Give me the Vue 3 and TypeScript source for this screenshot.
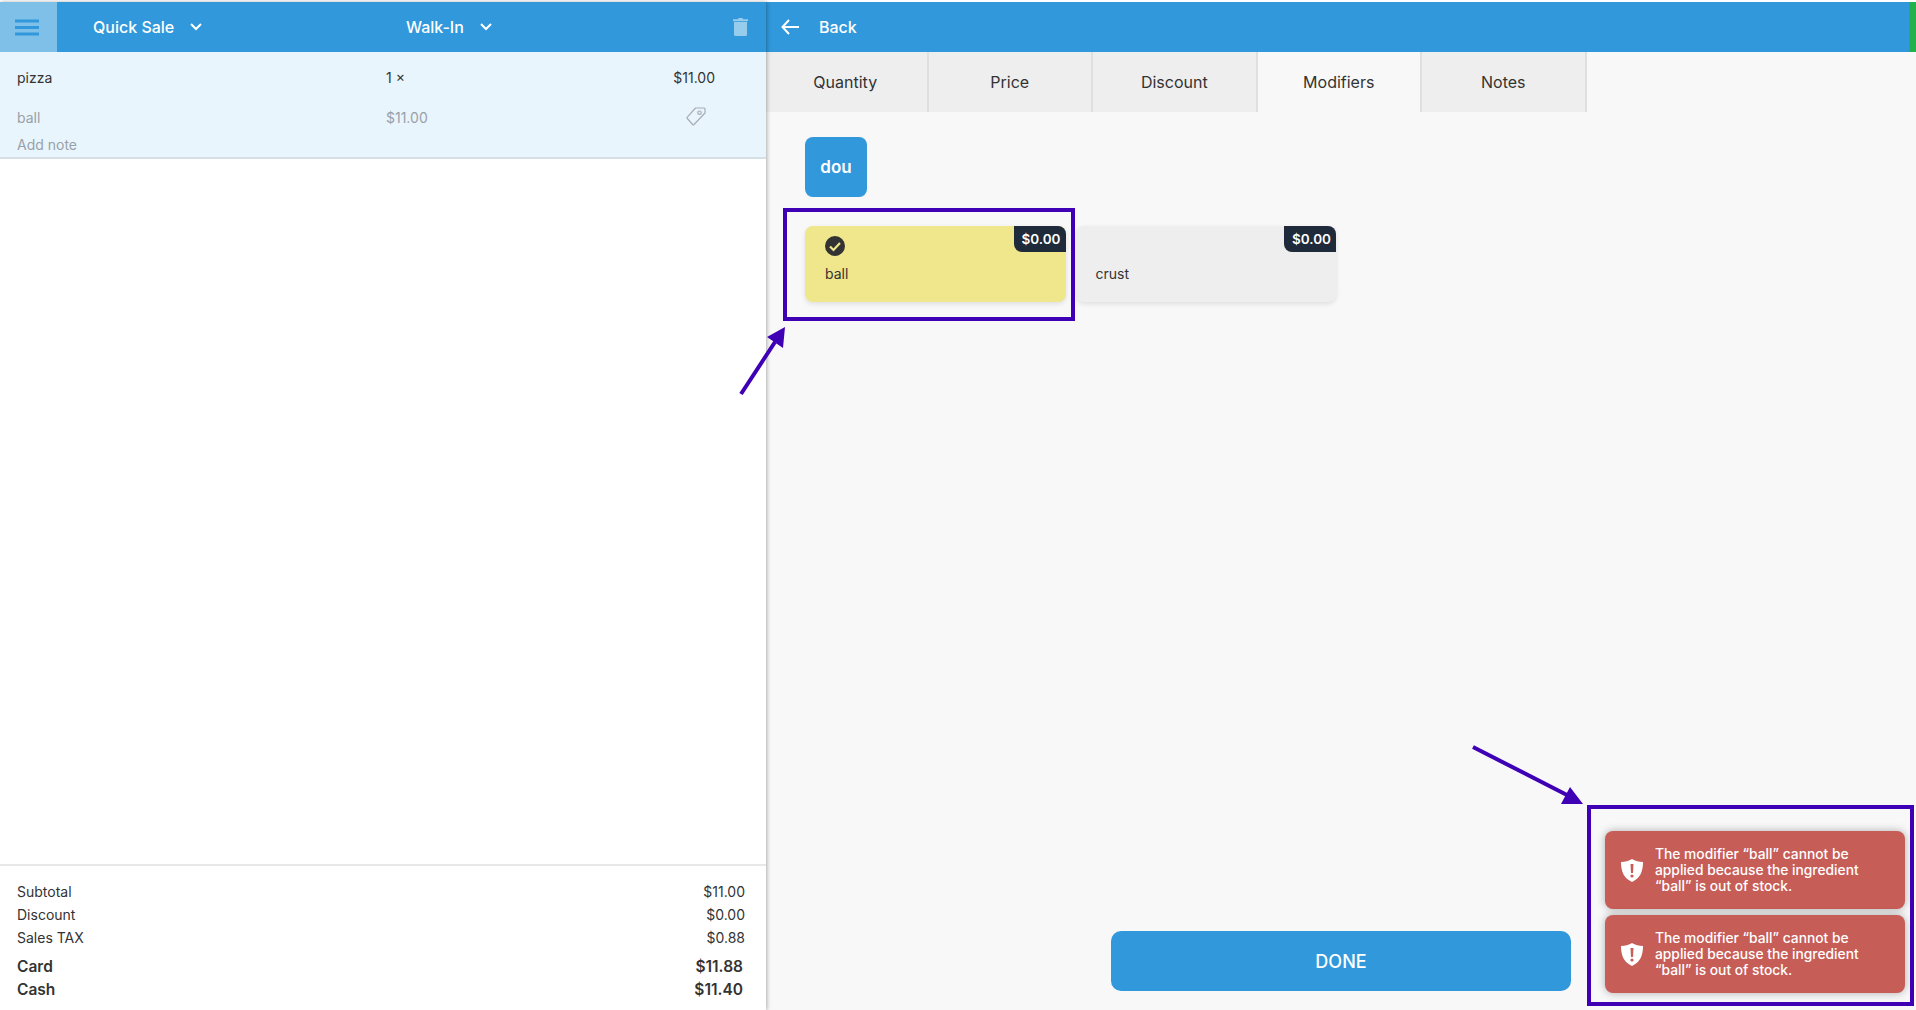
<script setup lang="ts">
const tabs = ['Quantity', 'Price', 'Discount', 'Modifiers', 'Notes']
const modifiers = [
  { name: 'ball', price: '$0.00', selected: true },
  { name: 'crust', price: '$0.00', selected: false },
]
const summary = [
  { label: 'Subtotal', value: '$11.00' },
  { label: 'Discount', value: '$0.00' },
  { label: 'Sales TAX', value: '$0.88' },
]
const totals = [
  { label: 'Card', value: '$11.88' },
  { label: 'Cash', value: '$11.40' },
]
const toasts = [
  'The modifier “ball” cannot be applied because the ingredient “ball” is out of stock.',
  'The modifier “ball” cannot be applied because the ingredient “ball” is out of stock.',
]
</script>

<template>
  <div class="app">
    <section class="left">
      <header class="left-bar">
        <div class="menu">
          <svg width="24" height="18" viewBox="0 0 24 18"><path d="M0 3h24M0 9.500h24M0 16h24" stroke="#3098db" stroke-width="3" /></svg>
        </div>
        <div class="picker first">
          Quick Sale
          <svg class="chev" width="14" height="9" viewBox="0 0 14 9"><path d="M2 2l5 5 5-5" fill="none" stroke="#fff" stroke-width="2" /></svg>
        </div>
        <div class="picker">
          Walk-In
          <svg class="chev" width="14" height="9" viewBox="0 0 14 9"><path d="M2 2l5 5 5-5" fill="none" stroke="#fff" stroke-width="2" /></svg>
        </div>
        <svg class="trash" width="15" height="18" viewBox="0 0 15 18">
          <path d="M0 1.200h5L5.500 0h4l.5 1.200h5V3.200H0zM1 4h13v12.500a1.500 1.500 0 0 1-1.500 1.500h-10A1.500 1.500 0 0 1 1 16.500z" fill="#fff" fill-opacity=".5" />
        </svg>
      </header>

      <div class="item">
        <div class="item-row main">
          <span>pizza</span>
          <span>1 ×</span>
          <span class="end">$11.00</span>
        </div>
        <div class="item-row sub">
          <span>ball</span>
          <span>$11.00</span>
          <span class="end">
            <svg class="tag" width="20" height="19" viewBox="0 0 20 19">
              <path d="M9.500 1H18a1 1 0 0 1 1 1v4L8 17.500a1 1 0 0 1-1.400 0L1.300 11.500a1 1 0 0 1 0-1.400z" fill="none" stroke="#a6adb3" stroke-width="1.200" stroke-linejoin="round" />
              <circle cx="13.500" cy="5.700" r="1.700" fill="none" stroke="#a6adb3" stroke-width="1.200" />
            </svg>
          </span>
        </div>
        <div class="note">Add note</div>
      </div>

      <div class="spacer"></div>

      <div class="summary">
        <div v-for="row in summary" :key="row.label" class="sum-row">
          <span>{{ row.label }}</span><span>{{ row.value }}</span>
        </div>
        <div class="totals">
          <div v-for="row in totals" :key="row.label" class="sum-row total">
            <span>{{ row.label }}</span><span>{{ row.value }}</span>
          </div>
        </div>
      </div>
    </section>

    <section class="right">
      <header class="right-bar">
        <svg width="18" height="16" viewBox="0 0 18 16"><path d="M8 1L1.500 8 8 15M2 8h16" fill="none" stroke="#fff" stroke-width="2" /></svg>
        <span>Back</span>
        <i class="status"></i>
      </header>

      <nav class="tabs">
        <div v-for="tab in tabs" :key="tab" :class="['tab', { active: tab === 'Modifiers' }]">{{ tab }}</div>
      </nav>

      <div class="content">
        <button class="group">dou</button>
        <div class="mods">
          <div v-for="mod in modifiers" :key="mod.name" :class="['mod', { selected: mod.selected }]">
            <span class="price">{{ mod.price }}</span>
            <div class="check-slot">
              <svg v-if="mod.selected" width="20" height="20" viewBox="0 0 20 20">
                <circle cx="10" cy="10" r="10" fill="#333" />
                <path d="M5 10.500l3.500 3.500L15 7" fill="none" stroke="#f0e68c" stroke-width="2.200" />
              </svg>
            </div>
            <div class="mod-name">{{ mod.name }}</div>
          </div>
        </div>
      </div>

      <div class="footer">
        <button class="done">DONE</button>
      </div>
    </section>

    <div class="toasts">
      <div v-for="(msg, i) in toasts" :key="i" class="toast">
        <svg width="22" height="23" viewBox="0 0 22 23">
          <path d="M11 0c3 2 7 3 11 3 0 9-2.500 16-11 20C2.500 19 0 12 0 3c4 0 8-1 11-3z" fill="#fff" />
          <path d="M9.500 5h3l-.5 9h-2z" fill="#c75d57" />
          <circle cx="11" cy="17" r="1.600" fill="#c75d57" />
        </svg>
        <p>{{ msg }}</p>
      </div>
    </div>

    <!-- annotations drawn on top of the screenshot -->
    <svg class="marks" width="1916" height="1010" viewBox="0 0 1916 1010">
      <g fill="none" stroke="#3f00b5" stroke-width="4">
        <rect x="785" y="210" width="288" height="109" />
        <rect x="1589" y="807" width="323" height="197" />
        <path d="M741 394L775 342M1473 747L1567 795" />
      </g>
      <path d="M785 327L767 337 783 348zM1583 804L1570 787 1561 804z" fill="#3f00b5" />
    </svg>
  </div>
</template>

<style>
html, body { margin: 0; background: #fff; }
</style>

<style scoped>
.app {
  position: relative;
  display: flex;
  width: 1916px;
  height: 1010px;
  padding-top: 2px;
  box-sizing: border-box;
  overflow: hidden;
  font-family: Inter, "Liberation Sans", sans-serif;
  font-size: 14px;
  color: #333;
}
.left {
  position: relative;
  z-index: 2;
  display: flex;
  flex-direction: column;
  width: 766px;
  flex-shrink: 0;
  background: #fff;
  box-shadow: 1px 0 4px rgba(0, 0, 0, .3);
}
.left-bar, .right-bar {
  display: flex;
  align-items: center;
  height: 50px;
  padding-bottom: 1px;
  box-sizing: border-box;
  background: #3098db;
  color: #fff;
  font-size: 16px;
  font-weight: 500;
  flex-shrink: 0;
}
.menu {
  display: flex;
  align-items: center;
  justify-content: center;
  width: 57px;
  height: 50px;
  margin-bottom: -1px;
  padding-right: 3px;
  box-sizing: border-box;
  background: #7fc0e8;
}
.picker {
  display: flex;
  align-items: center;
  flex: 1;
}
.picker.first {
  flex: none;
  width: 349px;
  box-sizing: border-box;
  padding-left: 36px;
}
.chev { margin-left: 15px; }
.trash { margin-right: 18px; }
.item {
  background: #e9f5fc;
  border-bottom: 2px solid #d6dfe6;
  height: 107px;
  box-sizing: border-box;
  flex-shrink: 0;
}
.item-row {
  display: grid;
  grid-template-columns: 369px 1fr auto;
  align-items: center;
  padding: 0 51px 0 17px;
}
.item-row.main { height: 50px; }
.item-row.sub { height: 30px; color: #98a1a9; }
.end { display: flex; justify-content: flex-end; }
.tag { margin-right: 9px; margin-top: -2px; }
.note { padding-left: 17px; line-height: 26px; color: #98a1a9; }
.spacer { flex: 1; }
.summary {
  border-top: 2px solid #e8e8e8;
  padding: 14px 21px 9px 17px;
}
.sum-row {
  display: flex;
  justify-content: space-between;
  line-height: 23px;
}
.totals { margin-top: 6px; }
.total { font-size: 15.500px; font-weight: 600; padding-right: 2px; }
.right {
  display: flex;
  flex-direction: column;
  flex: 1;
  min-width: 0;
  background: #f8f8f8;
}
.right-bar { padding-left: 15px; gap: 20px; }
.status {
  width: 7px;
  height: 50px;
  margin-bottom: -1px;
  margin-left: auto;
  background: #22b14c;
}
.tabs {
  display: flex;
  margin-left: -2px;
  height: 60px;
  flex-shrink: 0;
}
.tab {
  display: flex;
  align-items: center;
  justify-content: center;
  width: 164.500px;
  padding-bottom: 1px;
  box-sizing: border-box;
  border-right: 2px solid #dfdfdf;
  background: #eee;
  font-size: 16px;
}
.tab.active { background: #f8f8f8; }
.content {
  flex: 1;
  padding: 25px 0 0 39px;
}
.group {
  display: block;
  width: 62px;
  height: 60px;
  border: 0;
  border-radius: 8px;
  background: #3098db;
  color: #fff;
  font: 600 17px Inter, "Liberation Sans", sans-serif;
}
.mods {
  display: flex;
  gap: 10px;
  margin-top: 29px;
}
.mod {
  position: relative;
  width: 260.500px;
  height: 76px;
  padding: 10px 20px;
  box-sizing: border-box;
  border-radius: 8px;
  background: #eee;
  box-shadow: 0 2px 5px rgba(0, 0, 0, .1);
}
.mod.selected { background: #f0e68c; }
.price {
  position: absolute;
  top: 0;
  right: 0;
  width: 52px;
  height: 26px;
  padding-left: 3px;
  box-sizing: border-box;
  border-radius: 0 8px 0 8px;
  background: #1f2a3a;
  color: #fff;
  font-size: 13.500px;
  font-weight: 600;
  line-height: 26px;
  text-align: center;
}
.check-slot { height: 20px; }
.mod-name { margin-top: 9px; line-height: 18px; }
.footer {
  display: flex;
  justify-content: center;
  padding-bottom: 19px;
}
.done {
  width: 460px;
  height: 60px;
  border: 0;
  border-radius: 10px;
  background: #3098db;
  color: #fff;
  font: 500 18px Inter, "Liberation Sans", sans-serif;
}
.toasts {
  position: absolute;
  right: 11px;
  bottom: 17px;
  z-index: 3;
  display: flex;
  flex-direction: column;
  gap: 6px;
}
.toast {
  display: flex;
  align-items: center;
  gap: 12px;
  width: 300px;
  height: 78px;
  padding-left: 16px;
  box-sizing: border-box;
  border-radius: 8px;
  background: #c75d57;
  color: #fff;
  box-shadow: 0 0 8px rgba(0, 0, 0, .3);
}
.toast svg { flex-shrink: 0; }
.toast p {
  margin: 0;
  width: 225px;
  font-size: 13.800px;
  font-weight: 500;
  line-height: 16px;
}
.marks {
  position: absolute;
  top: 0;
  left: 0;
  z-index: 4;
  pointer-events: none;
}
</style>
